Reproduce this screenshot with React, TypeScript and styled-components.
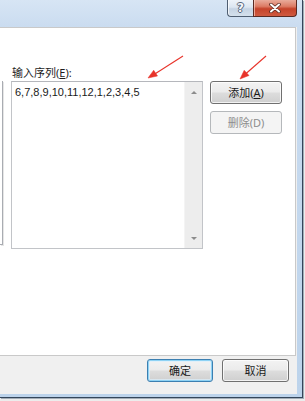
import React from "react";
import styled, { createGlobalStyle, css } from "styled-components";

const Global = createGlobalStyle`
  html, body { margin: 0; padding: 0; background: #ececec; }
  body { font-family: "Noto Sans", "Noto Sans CJK SC", sans-serif; }
`;

const Screen = styled.div`
  position: relative;
  width: 305px;
  height: 401px;
  overflow: hidden;
  background: #ececec;
`;

const Window = styled.div`
  width: 303px;
  height: 398px;
  box-sizing: border-box;
  display: flex;
  flex-direction: column;
  padding: 0 5px 3px 0;
  background: linear-gradient(180deg, #d7e5f4 0%, #cadcf0 27px, #bcd3eb 100%);
  border-right: 1px solid #34465a;
  border-bottom: 1px solid #34465a;
  box-shadow: 1px 1px 0 #a3adb8;
`;

const TitleBar = styled.div`
  height: 27px;
  flex: none;
  display: flex;
  justify-content: flex-end;
  align-items: flex-start;
`;

const CaptionButton = styled.div<{ $kind: "help" | "close" }>`
  height: 17px;
  box-sizing: border-box;
  display: flex;
  align-items: center;
  justify-content: center;
  border: 1px solid #4f5e71;
  border-top: none;
  ${(p) =>
    p.$kind === "help"
      ? css`
          width: 26px;
          border-right: none;
          border-bottom-left-radius: 4px;
          background: linear-gradient(180deg, #eef3f9 0%, #dce6f1 45%, #c5d3e3 55%, #d4e0ec 100%);
          box-shadow: inset 1px 0 0 rgba(255, 255, 255, 0.7);
        `
      : css`
          width: 44px;
          border-bottom-right-radius: 4px;
          border-color: #5a2a22;
          background: linear-gradient(180deg, #e9ab9b 0%, #dc7b64 40%, #c5432a 55%, #cf5a40 100%);
          box-shadow: inset 1px 0 0 rgba(255, 220, 210, 0.6);
        `}
`;

const HelpGlyph = styled.span`
  font-family: "DejaVu Sans", sans-serif;
  font-weight: bold;
  font-size: 12px;
  line-height: 1;
  color: #f4f7fb;
  text-shadow: 1px 0 0 #55657a, -1px 0 0 #55657a, 0 1px 0 #55657a, 0 -1px 0 #55657a;
`;

const Client = styled.div`
  flex: 1;
  display: flex;
  flex-direction: column;
  background: #f0f0f0;
  padding-right: 1px;
`;

const Panel = styled.div`
  height: 329px;
  flex: none;
  box-sizing: border-box;
  background: #ffffff;
  border: 1px solid #c9c9c9;
  border-left: none;
  display: flex;
  align-items: flex-start;
  padding-top: 36px;
`;

const ListStub = styled.div`
  margin-top: 17px;
  width: 3px;
  height: 164px;
  box-sizing: border-box;
  border-right: 1px solid #a9acb2;
  border-bottom: 1px solid #a9acb2;
  box-shadow: 1px 1px 0 #e6e6e6;
  background: #ffffff;
`;

const MiddleColumn = styled.div`
  margin-left: 8px;
  width: 192px;
  display: flex;
  flex-direction: column;
`;

const Label = styled.div`
  height: 17px;
  font-size: 11px;
  line-height: 17px;
  color: #1e1e1e;
  padding-left: 1px;
  white-space: nowrap;
`;

const Key = styled.span`
  text-decoration: underline;
  text-underline-offset: 1px;
`;

const TextBox = styled.div`
  height: 168px;
  box-sizing: border-box;
  border: 1px solid #c2c4c8;
  border-top-color: #b5b7bc;
  display: flex;
  background: #ffffff;
`;

const TextContent = styled.div`
  flex: 1;
  padding: 3px 3px;
  font-family: "Liberation Sans", "Noto Sans CJK SC", sans-serif;
  font-size: 11px;
  line-height: 14px;
  color: #1a1a1a;
  white-space: nowrap;
`;

const ScrollBar = styled.div`
  width: 17px;
  flex: none;
  background: #ededed;
  border-left: 1px solid #f4f4f4;
  display: flex;
  flex-direction: column;
  justify-content: space-between;
  align-items: center;
  padding: 9px 0 8px;
`;

const Arrow = styled.div<{ $down?: boolean }>`
  width: 0;
  height: 0;
  border-left: 3px solid transparent;
  border-right: 3px solid transparent;
  ${(p) =>
    p.$down
      ? css`border-top: 3px solid #8c8c8c;`
      : css`border-bottom: 3px solid #8c8c8c;`}
`;

const SideColumn = styled.div`
  margin-left: 7px;
  margin-top: 17px;
  width: 72px;
  display: flex;
  flex-direction: column;
  gap: 7px;
`;

const Button = styled.div<{ $width?: number; $disabled?: boolean; $default?: boolean }>`
  width: ${(p) => p.$width ?? 72}px;
  height: 23px;
  box-sizing: border-box;
  display: flex;
  align-items: center;
  justify-content: center;
  border-radius: 3px;
  font-size: 11px;
  line-height: 1;
  white-space: nowrap;
  border: 1px solid #707070;
  color: #1a1a1a;
  background: linear-gradient(180deg, #f3f3f3 0%, #ebebeb 48%, #dddddd 52%, #cfcfcf 100%);
  box-shadow: inset 0 0 0 1px rgba(255, 255, 255, 0.75);
  ${(p) =>
    p.$disabled &&
    css`
      border-color: #b5b8bb;
      background: #f4f4f4;
      color: #8d8d8d;
      box-shadow: none;
    `}
  ${(p) =>
    p.$default &&
    css`
      border-color: #3c7fb1;
      box-shadow: inset 0 0 0 1px #8ed2f4, inset 0 0 0 2px rgba(220, 240, 252, 0.7);
    `}
`;

const Footer = styled.div`
  display: flex;
  justify-content: flex-end;
  gap: 9px;
  padding: 3px 7px 0 0;
`;

const Overlay = styled.svg`
  position: absolute;
  left: 0;
  top: 0;
  pointer-events: none;
`;

export default function App() {
  return (
    <>
      <Global />
      <Screen>
        <Window>
          <TitleBar>
            <CaptionButton $kind="help">
              <HelpGlyph>?</HelpGlyph>
            </CaptionButton>
            <CaptionButton $kind="close">
              <svg width="12" height="10" viewBox="0 0 12 10">
                <path d="M2 1.5 L10 8.5 M10 1.5 L2 8.5" stroke="#5a2a22" strokeWidth="3.6" strokeLinecap="round" />
                <path d="M2 1.5 L10 8.5 M10 1.5 L2 8.5" stroke="#ffffff" strokeWidth="2" strokeLinecap="round" />
              </svg>
            </CaptionButton>
          </TitleBar>
          <Client>
            <Panel>
              <ListStub />
              <MiddleColumn>
                <Label>
                  输入序列(<Key>E</Key>):
                </Label>
                <TextBox>
                  <TextContent>6,7,8,9,10,11,12,1,2,3,4,5</TextContent>
                  <ScrollBar>
                    <Arrow />
                    <Arrow $down />
                  </ScrollBar>
                </TextBox>
              </MiddleColumn>
              <SideColumn>
                <Button>
                  添加(<Key>A</Key>)
                </Button>
                <Button $disabled>删除(D)</Button>
              </SideColumn>
            </Panel>
            <Footer>
              <Button $width={66} $default>
                确定
              </Button>
              <Button $width={67}>取消</Button>
            </Footer>
          </Client>
        </Window>
        <Overlay width="305" height="401" viewBox="0 0 305 401">
          <g stroke="#e8332a" strokeWidth="1.1" fill="#e8332a">
            <line x1="183" y1="56" x2="154" y2="74.5" />
            <polygon points="148,78 157.5,76 153.7,70.2" strokeWidth="0.5" />
            <line x1="266" y1="56" x2="245.5" y2="74" />
            <polygon points="240,79 249,75.5 244.2,70.3" strokeWidth="0.5" />
          </g>
        </Overlay>
      </Screen>
    </>
  );
}
